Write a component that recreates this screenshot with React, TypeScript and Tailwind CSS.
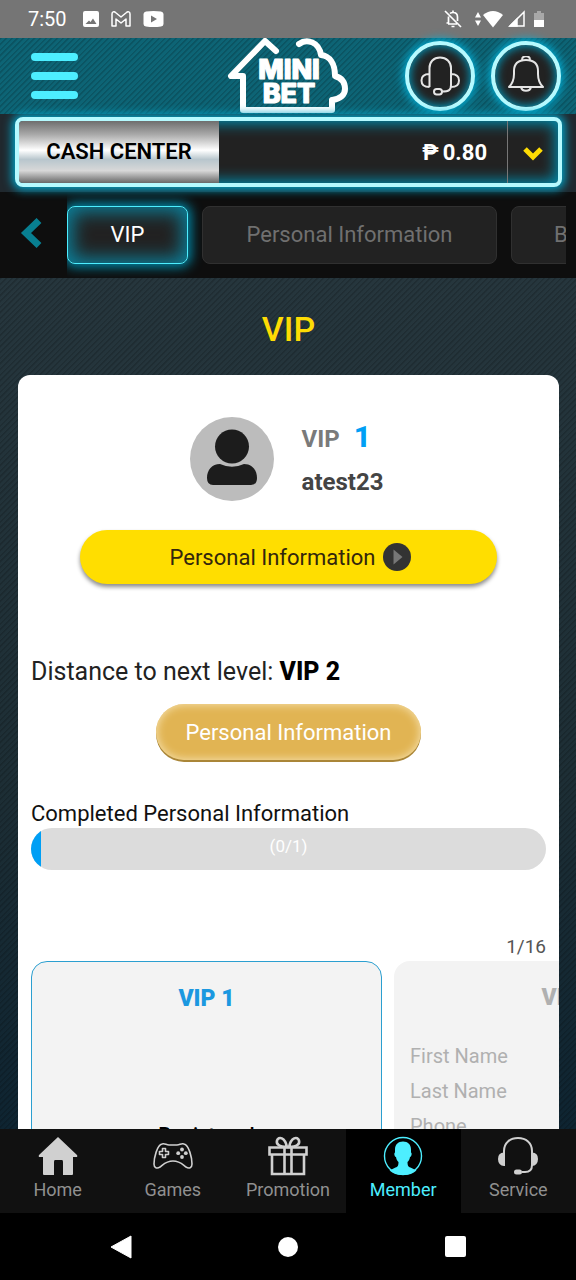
import { ReactNode } from "react"

const navItems = [
  { label: "Home", icon: <HomeIcon /> },
  { label: "Games", icon: <GamesIcon /> },
  { label: "Promotion", icon: <GiftIcon /> },
  { label: "Member", icon: <MemberIcon />, active: true },
  { label: "Service", icon: <ServiceIcon /> },
]

const stripes =
  "bg-[repeating-linear-gradient(135deg,rgba(0,0,0,0.16)_0px,rgba(0,0,0,0.16)_1px,transparent_2px,transparent_4px)]"

function HomeIcon() {
  return (
    <svg viewBox="0 0 40 40" className="size-10" fill="#d0d0d0">
      <path d="M20 1 39 19q1 2-1 2h-3v17q0 1-1 1h-9V26q0-2-1-2h-7q-1 0-1 2v13H6q-1 0-1-1V21H2q-2 0-1-2z" />
    </svg>
  )
}

function GamesIcon() {
  return (
    <svg viewBox="0 0 40 40" className="size-10" fill="none" stroke="#d0d0d0" strokeWidth="1.6" strokeLinejoin="round">
      <path d="M9 8c3-1 4 1 7 1h8c3 0 4-2 7-1 5 1 8 14 8 20 0 4-3 5-6 3-4-3-6-6-13-6S11 28 7 31c-3 2-6 1-6-3C1 22 4 9 9 8z" />
      <path d="M9.500 12.500h3v3h3v3h-3v3h-3v-3h-3v-3h3z" />
      <g fill="#d0d0d0" stroke="none">
        <circle cx="29" cy="13.500" r="1.900" />
        <circle cx="29" cy="21" r="1.900" />
        <circle cx="25.200" cy="17.200" r="1.900" />
        <circle cx="32.800" cy="17.200" r="1.900" />
      </g>
    </svg>
  )
}

function GiftIcon() {
  return (
    <svg viewBox="0 0 40 40" className="size-10" fill="none" stroke="#d0d0d0" strokeWidth="2.600">
      <path d="M1.500 11.500h37v7h-37zM4 18.500h32v19.500H4zM16.500 11.500V38M23.500 11.500V38" />
      <path d="M19 11C11 11 8 8 9 4.500 10.500 0 17 1 19 11zM21 11c8 0 11-3 10-6.500C29.500 0 23 1 21 11z" />
    </svg>
  )
}

function MemberIcon() {
  return (
    <svg viewBox="0 0 40 40" className="size-10" fill="#4deeff">
      <circle cx="20" cy="20" r="18.500" fill="none" stroke="#4deeff" strokeWidth="1.400" />
      <path d="M20 5.500c5 0 8 3 8 8v3c1 0 1 4-1 4.500-.5 3-1.500 4-2.500 5 0 4 1 5 4 6l5 2.500A19 19 0 0 1 20 39a19 19 0 0 1-13.500-4.500L11.500 32c3-1 4-2 4-6-1-1-2-2-2.500-5-2-.5-2-4.500-1-4.500v-3c0-5 3-8 8-8z" />
    </svg>
  )
}

function ServiceIcon() {
  return (
    <svg viewBox="0 0 40 40" className="size-10" fill="none" stroke="#d0d0d0" strokeWidth="2">
      <path d="M6 18V15C6 7 12 2 20 2s14 5 14 13v14c0 5-3 7-7 7h-3" />
      <path d="M6 17.500c-3 0-5 2-5 5.500s2 6 5 6zM34 17.500c3 0 5 2 5 5.500s-2 6-5 6z" fill="#d0d0d0" />
      <rect x="17" y="34.500" width="6" height="3" rx="1.500" fill="#d0d0d0" />
    </svg>
  )
}

function StatusBar() {
  return (
    <div className="flex h-[38px] shrink-0 items-center justify-between bg-[#757575] pr-8 pl-7 text-white">
      <div className="flex items-center gap-3">
        <span className="mr-1 text-xl">7:50</span>
        <svg viewBox="0 0 16 16" className="size-4" fill="white">
          <path fillRule="evenodd" d="M2 0h12q2 0 2 2v12q0 2-2 2H2q-2 0-2-2V2q0-2 2-2zM2.500 13h11L10 7.500l-2.500 3.500-1.500-1.500z" />
        </svg>
        <svg viewBox="0 0 20 16" className="h-4 w-5" fill="none" stroke="white" strokeWidth="1.500" strokeLinejoin="round">
          <path d="M1 15V3c0-2 2-3 3.500-1.500L10 6l5.500-4.500C17 0 19 1 19 3v12h-4V8l-5 4-5-4v7z" />
        </svg>
        <svg viewBox="0 0 21 16" className="h-4 w-[21px]" fill="white">
          <path fillRule="evenodd" d="M3 .5q7.500-1 15 0 2.500.5 2.500 2.500v10q0 2-2.500 2.500-7.500 1-15 0Q.5 15 .5 13V3Q.5 1 3 .5zM8 4.500v7l6-3.500z" />
        </svg>
      </div>
      <div className="flex items-center gap-1">
        <svg viewBox="0 0 18 18" className="mr-2 size-[18px]" fill="none" stroke="white" strokeWidth="1.700">
          <path d="M1 1l16 16M4.500 6.500V13H2.500M4 14h9M6 3.500C7 2.500 8 2.500 9 2.500c3 0 4.500 2 4.500 4.500v4M9 .5v2M7.500 16.500h3" />
        </svg>
        <div className="flex items-center">
          <svg viewBox="0 0 8 16" className="h-4 w-2" fill="white">
            <path d="M4 1l3 5.500H1zM4 15l3-5.500H1z" />
          </svg>
          <svg viewBox="0 0 22 18" className="h-[18px] w-[22px]" fill="white">
            <path d="M1 5Q11-3 21 5L11 17.500z" />
          </svg>
        </div>
        <svg viewBox="0 0 18 18" className="mr-1 size-[18px]" fill="none" stroke="white" strokeWidth="1.500">
          <path d="M16 2v14H2z" />
          <path d="M9 9v7H2z" fill="white" />
        </svg>
        <svg viewBox="0 0 10 16" className="h-4 w-[10px]">
          <path d="M0 2h3V0h4v2h3v8H0z" fill="#a8a8a8" />
          <path d="M0 9h10v7H0z" fill="white" />
        </svg>
      </div>
    </div>
  )
}

function Logo() {
  return (
    <svg viewBox="0 0 122 76" className="h-[76px] w-[122px] shrink-0" role="img" aria-label="Mini Bet">
      <path
        d="M49 13 38 3 4 38h12v34h89V62c8-1 13-5 13-11s-3-11-10-13c0-12-5-20-14-21C92 4 80 0 72 6"
        fill="none"
        stroke="white"
        strokeWidth="6"
        strokeLinejoin="round"
        strokeLinecap="round"
      />
      <g fontFamily="Inter, sans-serif" fontWeight="800" fontSize="27" fill="white" stroke="white" strokeWidth="1.200" strokeLinejoin="round" textAnchor="middle">
        <text x="62" y="41">MINI</text>
        <text x="62" y="65">BET</text>
      </g>
    </svg>
  )
}

function RoundButton({ label, children }: { label: string; children: ReactNode }) {
  return (
    <button
      aria-label={label}
      className="flex size-[70px] items-center justify-center rounded-full border-4 border-[#b5faff] bg-[#222] shadow-[0_0_10px_2px_#00b0d8,inset_0_0_10px_1px_#009cc0]"
    >
      {children}
    </button>
  )
}

function Header() {
  return (
    <header className={`flex h-[76px] shrink-0 items-center justify-between bg-[#0d6475] px-[15px] ${stripes}`}>
      <div className="flex flex-1">
        <button aria-label="Menu" className="ml-4 flex flex-col gap-[11px]">
          <span className="h-2 w-[47px] rounded-full bg-[#4deeff]" />
          <span className="h-2 w-[47px] rounded-full bg-[#4deeff]" />
          <span className="h-2 w-[47px] rounded-full bg-[#4deeff]" />
        </button>
      </div>
      <Logo />
      <div className="flex flex-1 justify-end gap-4">
        <RoundButton label="Customer service">
          <svg viewBox="0 0 40 40" className="size-10" fill="none" stroke="#e5e5e5" strokeWidth="2">
            <path d="M9.500 31V12c0-6 4-10.500 10.500-10.500S31 6 31 12v17c0 5-2 6.500-9 6.500M9.500 18c-5 0-8 2-8 6.500s3 6.500 8 6.500M31 18c5 0 8 2 8 6.500S36 31 31 31" />
            <rect x="14" y="33" width="8" height="5.500" rx="2.700" />
          </svg>
        </RoundButton>
        <RoundButton label="Notifications">
          <svg viewBox="0 0 40 40" className="size-10" fill="none" stroke="#e5e5e5" strokeWidth="2" strokeLinejoin="round">
            <path d="M3 31c4-4 5-7 5-13v-3C8 8 12 4 20 4s12 4 12 11v3c0 6 1 9 5 13zM16 4c0-5 8-5 8 0M15 31c1 5 9 5 10 0" />
          </svg>
        </RoundButton>
      </div>
    </header>
  )
}

function CashCenter() {
  return (
    <section className="shrink-0 bg-[#20282e] pr-[14px] pb-1 pl-[15px]">
      <div className="relative -mt-px flex h-[75px] items-stretch pt-1">
        <div className="relative flex h-[70px] flex-1 overflow-hidden rounded-lg border-4 border-[#b5faff] bg-[#222] shadow-[0_0_10px_3px_#00a3c7,inset_0_0_14px_3px_#008cac]">
          <button className="w-[200px] bg-[linear-gradient(#6e6e6e,#aaa_22%,#fff_47%,#b8c6cd_62%,#d8d8d8_80%,#686868)] text-[22px] leading-7 font-semibold text-black">
            CASH CENTER
          </button>
          <div className="flex flex-1 items-center justify-end gap-1 pr-5 text-[22px] font-bold text-white">
            <span>₱</span>
            <span>0.80</span>
          </div>
          <button aria-label="Show wallets" className="flex w-[51px] items-center justify-center border-l border-[#777]">
            <svg viewBox="0 0 20 14" className="mt-1 h-[14px] w-5" fill="none" stroke="#fedc04" strokeWidth="5">
              <path d="M2 2l8 8 8-8" />
            </svg>
          </button>
        </div>
      </div>
    </section>
  )
}

function Tabs() {
  return (
    <nav className="flex h-[86px] shrink-0 items-center bg-[#0e0e0e] pr-[10px] pl-5 text-[22px]">
      <button aria-label="Previous" className="mr-[25px] -mt-1">
        <svg viewBox="0 0 22 30" className="h-[30px] w-[22px]" fill="none" stroke="#087f91" strokeWidth="7">
          <path d="M19 2.500 6 15l13 12.500" />
        </svg>
      </button>
      <div className="flex h-full flex-1 items-center gap-[14px] overflow-hidden pb-px">
        <button className="h-[58px] w-[121px] shrink-0 rounded-lg border border-[#4deeff] bg-[#222] text-white shadow-[0_0_12px_3px_#008cac,inset_0_0_18px_5px_#0c7f99]">
          VIP
        </button>
        <button className="h-[58px] w-[295px] shrink-0 rounded-lg border border-[#303030] bg-[#222] text-[#707070]">
          Personal Information
        </button>
        <button className="h-[58px] shrink-0 rounded-lg border border-[#303030] bg-[#222] px-[42px] text-[#707070]">
          Bank
        </button>
      </div>
    </nav>
  )
}

function LevelCards() {
  return (
    <div className="flex gap-3 overflow-hidden pl-[13px] text-xl">
      <article className="h-[400px] w-[351px] shrink-0 rounded-2xl border border-[#2b9fd0] bg-[#f3f3f3] pt-[22px] text-center">
        <h3 className="text-[23px] leading-[30px] font-black text-[#1b98e0]">VIP 1</h3>
        <p className="mt-[103px] leading-[36px] font-medium text-black">Registered</p>
      </article>
      <article className="h-[400px] w-[351px] shrink-0 rounded-2xl bg-[#f3f3f3] px-4 pt-[22px] text-[#b0b0b0]">
        <h3 className="text-center text-[23px] leading-[30px] font-black">VIP 2</h3>
        <ul className="mt-[26px] leading-[35px]">
          <li>First Name</li>
          <li>Last Name</li>
          <li>Phone</li>
        </ul>
      </article>
    </div>
  )
}

export default function App() {
  const progress = 2

  return (
    <div className="flex h-screen flex-col overflow-hidden bg-black font-[Roboto,sans-serif]">
      <StatusBar />
      <Header />
      <CashCenter />
      <Tabs />

      {/* Main Content */}
      <main className="min-h-0 flex-1 overflow-hidden bg-[linear-gradient(#26363d,#1d2e35_60%,#0e2431)]">
        <div className={`min-h-full pr-[17px] pl-[18px] ${stripes}`}>
          <h1 className="pt-[31px] pb-[26px] text-center text-[34px] leading-10 font-medium text-[#fedc04]">VIP</h1>

          <div className="overflow-hidden rounded-xl bg-white pt-[42px]">
            <div className="flex items-start justify-center gap-7 pr-1">
              <svg viewBox="0 0 84 84" className="size-[84px]">
                <circle cx="42" cy="42" r="42" fill="#bcbcbc" />
                <circle cx="42" cy="29.500" r="17" fill="#1c1c1c" />
                <path d="M30 47q12 5.500 24 0c8 0 13 6 13 14q0 7-6 7H23q-6 0-6-7c0-8 5-14 13-14z" fill="#1c1c1c" />
              </svg>
              <div className="text-2xl leading-[43px] font-bold">
                <p className="text-[#7a7a7a]">
                  VIP <strong className="ml-2 text-[30px] leading-10 font-extrabold text-[#009ff5]">1</strong>
                </p>
                <p className="text-[#444]">atest23</p>
              </div>
            </div>

            <div className="mt-[26px] flex justify-center px-[62px]">
              <button className="flex h-[54px] w-full items-center justify-center gap-2 rounded-full bg-[#ffde00] pl-1 text-[22px] text-[#33260c] shadow-[0_3px_4px_rgba(0,0,0,0.45)]">
                Personal Information
                <svg viewBox="0 0 28 28" className="size-7">
                  <circle cx="14" cy="14" r="14" fill="#333" />
                  <path d="M10.500 6.500v15l9-7.500z" fill="#777" />
                </svg>
              </button>
            </div>

            <p className="mt-[70px] px-[13px] text-[25px] leading-9 text-[#222]">
              Distance to next level: <strong className="font-extrabold text-black">VIP 2</strong>
            </p>
            <div className="mt-[14px] flex justify-center">
              <button className="h-14 rounded-full bg-[#e1b453] px-[30px] text-[22px] text-white shadow-[0_2px_0_#aa8638,inset_0_0_9px_1px_#f5dfaa]">
                Personal Information
              </button>
            </div>

            <div className="mt-10 px-[13px]">
              <h2 className="text-[22px] leading-7 text-[#111]">Completed Personal Information</h2>
              <div className="relative h-[42px] overflow-hidden rounded-full bg-[#dcdcdc]">
                <div className="h-full bg-[#009ff5]" style={{ width: `${progress}%` }} />
                <span className="absolute inset-x-0 top-1 text-center text-[17px] leading-7 text-white">(0/1)</span>
              </div>
            </div>

            <p className="mt-[63px] px-[13px] text-right text-[19px] leading-7 text-[#555]">1/16</p>
            <LevelCards />
          </div>
        </div>
      </main>

      {/* Bottom menu */}
      <nav className="grid h-[84px] shrink-0 grid-cols-5 bg-[#111]">
        {navItems.map((item) => (
          <a
            key={item.label}
            href="#"
            className={`flex flex-col items-center pt-[7px] text-lg leading-7 ${item.active ? "bg-black text-[#4deeff]" : "text-[#909090]"}`}
          >
            {item.icon}
            {item.label}
          </a>
        ))}
      </nav>

      {/* System buttons */}
      <div className="grid h-[67px] shrink-0 grid-cols-[1fr_92px_1fr] items-center bg-black px-[110px]">
        <button aria-label="Back">
          <svg viewBox="0 0 22 24" className="h-6 w-[22px]" fill="white">
            <path d="M21 1v22L1 12z" stroke="white" strokeLinejoin="round" />
          </svg>
        </button>
        <button aria-label="Home screen" className="size-5 justify-self-center rounded-full bg-white" />
        <button aria-label="Recent apps" className="size-[21px] justify-self-end rounded-xs bg-white" />
      </div>
    </div>
  )
}
